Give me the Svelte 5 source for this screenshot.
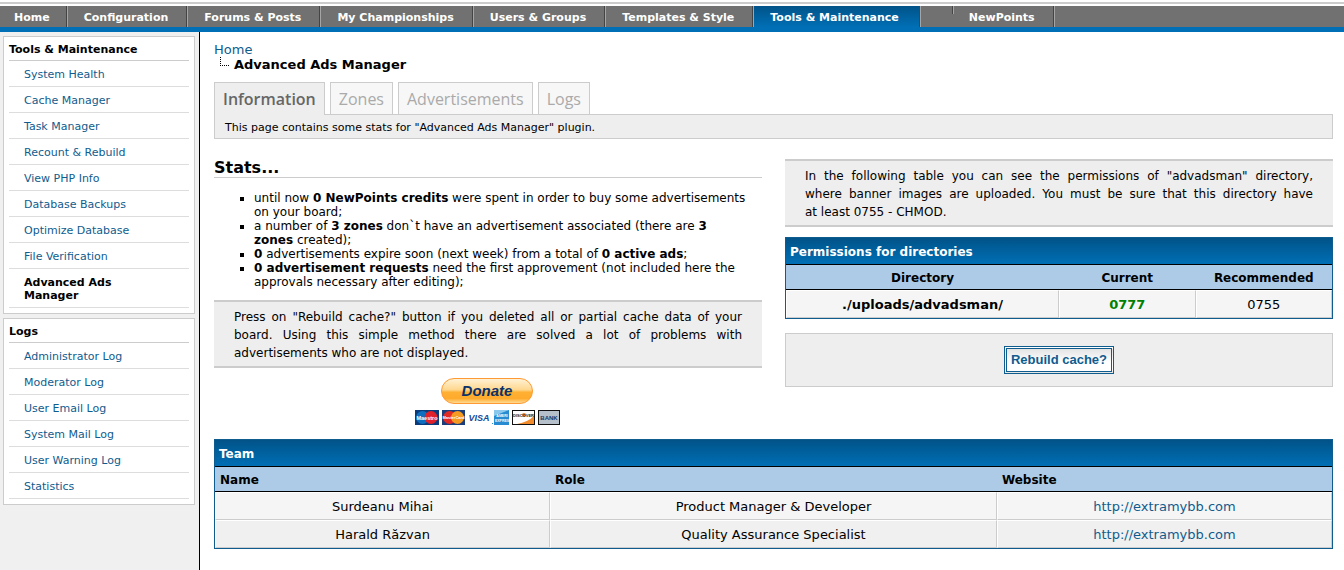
<script>
  const nav = ['Home', 'Configuration', 'Forums & Posts', 'My Championships', 'Users & Groups', 'Templates & Style', 'Tools & Maintenance'];
  const menus = [
    {
      title: 'Tools & Maintenance',
      items: ['System Health', 'Cache Manager', 'Task Manager', 'Recount & Rebuild', 'View PHP Info', 'Database Backups', 'Optimize Database', 'File Verification', 'Advanced Ads Manager']
    },
    {
      title: 'Logs',
      items: ['Administrator Log', 'Moderator Log', 'User Email Log', 'System Mail Log', 'User Warning Log', 'Statistics']
    }
  ];
  const tabs = ['Information', 'Zones', 'Advertisements', 'Logs'];
  const team = [
    { name: 'Surdeanu Mihai', role: 'Product Manager & Developer', site: 'http://extramybb.com' },
    { name: 'Harald Răzvan', role: 'Quality Assurance Specialist', site: 'http://extramybb.com' }
  ];
</script>

<div class="page">
  <div class="topline"></div>
  <nav class="topnav">
    {#each nav as item}
      <a href="#top" class:active={item === 'Tools & Maintenance'}>{item}</a>
    {/each}
    <span class="stub"></span>
    <a href="#top">NewPoints</a>
  </nav>

  <div class="body">
    <aside>
      {#each menus as menu}
        <section class="menu">
          <h2>{menu.title}</h2>
          <ul>
            {#each menu.items as item}
              <li><a href="#menu" class:current={item === 'Advanced Ads Manager'}>{item}</a></li>
            {/each}
          </ul>
        </section>
      {/each}
    </aside>

    <main>
      <div class="crumbs">
        <a href="#home">Home</a>
        <div class="here"><i class="elbow"></i><strong>Advanced Ads Manager</strong></div>
      </div>

      <div class="tabs">
        {#each tabs as tab, i}
          <a href="#tab" class:active={i === 0}>{tab}</a>
        {/each}
      </div>
      <div class="intro">This page contains some stats for "Advanced Ads Manager" plugin.</div>

      <div class="columns">
        <div class="col">
          <h1>Stats...</h1>
          <ul class="stats">
            <li>until now <b>0 NewPoints credits</b> were spent in order to buy some advertisements on your board;</li>
            <li>a number of <b>3 zones</b> don`t have an advertisement associated (there are <b>3<br />zones</b> created);</li>
            <li><b>0</b> advertisements expire soon (next week) from a total of <b>0 active ads</b>;</li>
            <li><b>0 advertisement requests</b> need the first approvement (not included here the approvals necessary after editing);</li>
          </ul>
          <p class="note">Press on "Rebuild cache?" button if you deleted all or partial cache data of your board. Using this simple method there are solved a lot of problems with advertisements who are not displayed.</p>
          <button class="donate" type="button" aria-label="Donate">
            <svg width="147" height="47" viewBox="0 0 147 47">
              <defs>
                <linearGradient id="gold" x1="0" y1="0" x2="0" y2="1">
                  <stop offset="0" stop-color="#fff3d8" />
                  <stop offset="0.45" stop-color="#ffd78e" />
                  <stop offset="0.55" stop-color="#ffb033" />
                  <stop offset="0.8" stop-color="#ffab2d" />
                  <stop offset="1" stop-color="#ffe0a0" />
                </linearGradient>
              </defs>
              <rect x="27.500" y="0.500" width="91" height="25" rx="12.500" fill="url(#gold)" stroke="#ff9933" />
              <text x="73" y="18" text-anchor="middle" font-size="15" font-weight="bold" font-style="italic" fill="#0b3269">Donate</text>
              <g transform="translate(1 32)">
                <rect width="24" height="15" fill="#0a3b7c" />
                <circle cx="7.500" cy="7.500" r="6.500" fill="#0e6fc0" />
                <circle cx="16" cy="7.500" r="6.500" fill="#e0202a" />
                <text x="12" y="9.500" text-anchor="middle" font-size="5.500" font-weight="bold" fill="#fff">Maestro</text>
              </g>
              <g transform="translate(28 32)">
                <rect width="23" height="15" fill="#1c3d7c" />
                <circle cx="7.500" cy="7.500" r="6.500" fill="#e02a25" />
                <circle cx="15.500" cy="7.500" r="6.500" fill="#f59a23" />
                <text x="11.500" y="9" text-anchor="middle" font-size="4" font-weight="bold" fill="#fff">MasterCard</text>
              </g>
              <text x="65" y="43" text-anchor="middle" font-size="9" font-weight="bold" font-style="italic" fill="#164a98">VISA</text>
              <g transform="translate(80 32)">
                <rect width="15" height="15" fill="#268bd0" />
                <path d="M0 0H15L0 6Z" fill="#8bc8ed" />
                <text x="8" y="7" text-anchor="middle" font-size="3.500" font-weight="bold" fill="#fff">AMERI</text>
                <text x="8" y="12" text-anchor="middle" font-size="3.500" font-weight="bold" fill="#fff">EXPRES</text>
                <path d="M-2 13.500H-1" stroke="#268bd0" />
              </g>
              <g transform="translate(98 32)">
                <rect x="0.500" y="0.500" width="22" height="14" fill="#fff" stroke="#111" />
                <path d="M22 6V14H5Q16 12 22 6Z" fill="#f28b2c" />
                <circle cx="12" cy="5" r="2" fill="#ee7e23" />
                <text x="11.500" y="7" text-anchor="middle" font-size="4" font-weight="bold" fill="#222">DISCOVER</text>
              </g>
              <g transform="translate(124 32)">
                <rect x="0.500" y="0.500" width="21" height="14" fill="#b5c0cb" stroke="#111" />
                <text x="11" y="10" text-anchor="middle" font-size="6" font-weight="bold" fill="#1c3762">BANK</text>
              </g>
            </svg>
          </button>
        </div>

        <div class="col">
          <p class="note">
            <span class="line">In the following table you can see the permissions of "advadsman" directory,</span>
            <span class="line">where banner images are uploaded. You must be sure that this directory have</span>
            at least 0755 - CHMOD.
          </p>
          <div class="grid perms">
            <h3>Permissions for directories</h3>
            <table>
              <thead>
                <tr><th class="half">Directory</th><th class="quarter">Current</th><th class="quarter">Recommended</th></tr>
              </thead>
              <tbody>
                <tr><td><b>./uploads/advadsman/</b></td><td><b class="ok">0777</b></td><td>0755</td></tr>
              </tbody>
            </table>
          </div>
          <div class="action"><button type="button">Rebuild cache?</button></div>
        </div>
      </div>

      <div class="grid team">
        <h3>Team</h3>
        <table>
          <thead>
            <tr><th class="side">Name</th><th>Role</th><th class="side">Website</th></tr>
          </thead>
          <tbody>
            {#each team as person}
              <tr><td>{person.name}</td><td>{person.role}</td><td><a href="#site">{person.site}</a></td></tr>
            {/each}
          </tbody>
        </table>
      </div>
    </main>
  </div>
</div>

<style>
  :global(body) {
    margin: 0;
    background: #fff;
  }
  .page {
    display: flex;
    flex-direction: column;
    min-height: 100vh;
    font: 13px/16px Verdana, "DejaVu Sans", sans-serif;
    color: #000;
  }
  .page * {
    box-sizing: border-box;
  }
  a {
    color: #0f5c8e;
    text-decoration: none;
  }
  h1, h2, h3, ul, p {
    margin: 0;
    padding: 0;
  }
  .topline {
    height: 6px;
    background: linear-gradient(#fff 2px, #ccc 2px, #ccc 4px, #fff 4px);
  }
  .topnav {
    display: flex;
    height: 26px;
    background: #717171;
    border-bottom: 5px solid #006fb5;
  }
  .topnav a {
    padding: 1px 18px 0 16px;
    border-right: 1px solid #444;
    box-shadow: 1px 0 #a5a5a5;
    margin-right: 1px;
    font-size: 11px;
    line-height: 21px;
    font-weight: bold;
    color: #fff;
    white-space: nowrap;
  }
  .topnav a:first-child {
    padding-left: 14px;
    padding-right: 16px;
  }
  .topnav a.active {
    padding-right: 20px;
    background: linear-gradient(#015388, #006fb5);
  }
  .stub {
    width: 32px;
    height: 8px;
    border-right: 1px solid #444;
    box-shadow: 1px 0 #a5a5a5;
  }
  .body {
    flex: 1;
    display: flex;
  }
  aside {
    flex: none;
    width: 200px;
    padding: 4px 4px 0 3px;
    background: #f0f0f0;
    border-right: 1px solid #000;
  }
  .menu {
    margin-bottom: 4px;
    padding: 0 5px 5px;
    border: 1px solid #ccc;
    background: #fff;
    font-size: 11px;
    line-height: 13px;
  }
  .menu h2 {
    padding: 6px 0 4px;
    border-bottom: 1px solid #ccc;
    font-size: 11px;
  }
  .menu ul {
    list-style: none;
  }
  .menu li {
    padding: 7px 40px 5px 15px;
    border-bottom: 1px solid #ddd;
  }
  .menu .current {
    font-weight: bold;
    color: #000;
  }
  main {
    flex: 1;
    min-width: 0;
    padding: 11px 11px 21px 14px;
  }
  .crumbs {
    line-height: 14px;
  }
  .here {
    display: flex;
    line-height: 16px;
  }
  .elbow {
    width: 9px;
    height: 9px;
    margin: 0 5px 0 6px;
    border-left: 1px dotted #000;
    border-bottom: 1px dotted #000;
  }
  .tabs {
    display: flex;
    gap: 5px;
    margin-top: 9px;
  }
  .tabs a {
    height: 32px;
    padding: 0 8px;
    border: 1px solid #ccc;
    border-bottom: 0;
    background: #f7f7f7;
    font: 16px/32px "Open Sans", sans-serif;
    color: #aaa;
  }
  .tabs a.active {
    height: 33px;
    margin-bottom: -1px;
    background: #eee;
    font-weight: 600;
    color: #666;
    z-index: 1;
  }
  .intro {
    padding: 5px 10px 3px;
    border: 1px solid #ccc;
    background: #eee;
    font-size: 11px;
    line-height: 15px;
  }
  .columns {
    display: grid;
    grid-template-columns: 1fr 1fr;
    gap: 23px;
    margin-top: 20px;
  }
  h1 {
    border-bottom: 1px solid #ccc;
    font-size: 16px;
    line-height: 18px;
  }
  .stats {
    margin: 13px 0 11px;
    padding-left: 40px;
    list-style: square;
    font-size: 12px;
    line-height: 14px;
  }
  .note {
    padding: 6px 20px 4px;
    border: solid #ccc;
    border-width: 2px 0;
    background: #eee;
    font-size: 12px;
    line-height: 18px;
    text-align: justify;
  }
  .line {
    display: block;
    text-align-last: justify;
  }
  .donate {
    display: block;
    margin: 10px auto 0;
    padding: 0 2px 0 0;
    border: 0;
    background: none;
  }
  .donate svg {
    display: block;
    font-family: "Liberation Sans", Arial, sans-serif;
  }
  .grid {
    border: 1px solid #0f5c8e;
  }
  .grid h3 {
    padding: 6px 4px 4px;
    border-bottom: 1px solid #000;
    background: linear-gradient(#015388, #006fb5);
    font-size: 12px;
    line-height: 16px;
    color: #fff;
  }
  table {
    width: 100%;
    table-layout: fixed;
    border-collapse: separate;
    border-spacing: 0;
  }
  th {
    padding: 5px 5px 3px;
    border-bottom: 1px solid #000;
    background: #adcae6;
    font-size: 12px;
  }
  td {
    padding: 6px 5px 4px;
    border: 1px solid;
    border-color: #fff #ccc #ccc #fff;
    background: #f5f5f5;
    text-align: center;
  }
  tr:nth-child(2) td {
    background: #f0f0f0;
  }
  .half {
    width: 50%;
  }
  .quarter {
    width: 25%;
  }
  .side {
    width: 30%;
  }
  .ok {
    color: #008000;
  }
  .perms {
    margin: 10px 0 14px;
  }
  .team {
    margin-top: 14px;
  }
  .team th {
    text-align: left;
  }
  .action {
    display: flex;
    justify-content: center;
    padding: 12px;
    border: 1px solid #ccc;
    background: #eee;
  }
  .action button {
    padding: 3px 4px;
    border: 3px double #0f5c8e;
    background: linear-gradient(#e4e4e4, #fff 60%);
    font: bold 13px/16px "Liberation Sans", Arial, sans-serif;
    color: #0f5c8e;
  }
</style>
